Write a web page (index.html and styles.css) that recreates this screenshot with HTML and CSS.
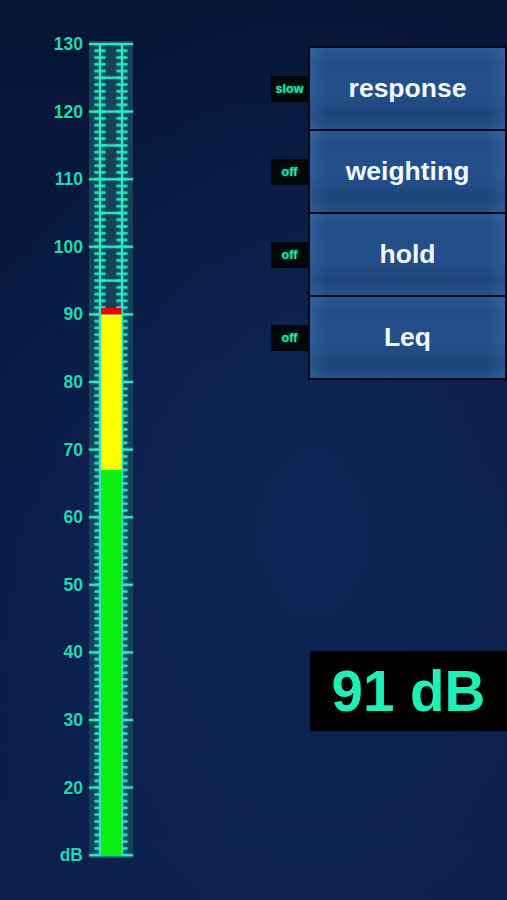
FILE: index.html
```html
<!DOCTYPE html>
<html>
<head>
<meta charset="utf-8">
<link rel="stylesheet" href="styles.css">
</head>
<body>
<div class="app">
  <svg class="meter" width="140" height="900" viewBox="0 0 140 900">
    <defs>
      <pattern id="minor" patternUnits="userSpaceOnUse" x="0" y="40.62" width="140" height="6.76">
        <rect x="94.5" y="2.28" width="11" height="2.2" fill="#2ee8c2"/>
        <rect x="116.5" y="2.28" width="11" height="2.2" fill="#2ee8c2"/>
      </pattern>
    </defs>
    <rect x="89" y="41" width="44" height="817" fill="#134259"/>
    <g class="ticks">
      <rect x="0" y="44" width="140" height="812" fill="url(#minor)"/>
      <rect x="99" y="44" width="2" height="812" fill="#2ee8c2"/>
      <rect x="121" y="44" width="2" height="812" fill="#2ee8c2"/>
      <g fill="#2ee8c2">
        <rect x="89" y="43" width="44" height="2"/>
        <rect x="89" y="110.6" width="44" height="2"/>
        <rect x="89" y="178.2" width="44" height="2"/>
        <rect x="89" y="245.8" width="44" height="2"/>
        <rect x="89" y="313.4" width="44" height="2"/>
        <rect x="89" y="381" width="44" height="2"/>
        <rect x="89" y="448.6" width="44" height="2"/>
        <rect x="89" y="516.2" width="44" height="2"/>
        <rect x="89" y="583.8" width="44" height="2"/>
        <rect x="89" y="651.4" width="44" height="2"/>
        <rect x="89" y="719" width="44" height="2"/>
        <rect x="89" y="786.6" width="44" height="2"/>
        <rect x="89" y="854.2" width="44" height="2"/>
        <rect x="100" y="76.8" width="22" height="2"/>
        <rect x="100" y="144.4" width="22" height="2"/>
        <rect x="100" y="212" width="22" height="2"/>
        <rect x="100" y="279.6" width="22" height="2"/>
      </g>
    </g>
    <rect x="101" y="470" width="20.5" height="386" fill="#0cf011"/>
    <rect x="101" y="314.4" width="20.5" height="155.6" fill="#ffff00"/>
    <rect x="101" y="308" width="20.5" height="6.4" fill="#e8000e"/>
    <g class="labels">
      <text x="83" y="44">130</text>
      <text x="83" y="111.6">120</text>
      <text x="83" y="179.2">110</text>
      <text x="83" y="246.8">100</text>
      <text x="83" y="314.4">90</text>
      <text x="83" y="382">80</text>
      <text x="83" y="449.6">70</text>
      <text x="83" y="517.2">60</text>
      <text x="83" y="584.8">50</text>
      <text x="83" y="652.4">40</text>
      <text x="83" y="720">30</text>
      <text x="83" y="787.6">20</text>
      <text x="83" y="855.2">dB</text>
    </g>
  </svg>
  <div class="panel">
    <div class="controls">
      <div class="row">
        <div class="indicator">slow</div>
        <div class="button">response</div>
      </div>
      <div class="row">
        <div class="indicator">off</div>
        <div class="button">weighting</div>
      </div>
      <div class="row">
        <div class="indicator">off</div>
        <div class="button">hold</div>
      </div>
      <div class="row">
        <div class="indicator">off</div>
        <div class="button">Leq</div>
      </div>
    </div>
    <div class="readout">91 dB</div>
  </div>
</div>
</body>
</html>
```

FILE: styles.css
```css
html, body {
  margin: 0;
  padding: 0;
}
body {
  width: 507px;
  height: 900px;
  overflow: hidden;
  font-family: "Liberation Sans", Arial, sans-serif;
  background:
    radial-gradient(ellipse 70% 60% at 62% 58%, #0e2656 0%, rgba(14,38,86,0) 100%),
    linear-gradient(to bottom, #061435 0%, #0a1d48 60%, #0b1f4c 100%);
}
.app {
  display: flex;
  width: 507px;
  height: 900px;
}
.meter {
  flex: none;
  display: block;
}
.ticks {
  filter: drop-shadow(0 0 1.2px rgba(46, 232, 194, 0.7));
}
.labels text {
  font-family: "Liberation Sans", Arial, sans-serif;
  font-weight: bold;
  font-size: 17.5px;
  fill: #20d8b2;
  text-anchor: end;
  dominant-baseline: central;
}
.panel {
  flex: 1;
  display: flex;
  flex-direction: column;
  align-items: flex-end;
  padding-top: 46px;
}
.controls {
  display: flex;
  flex-direction: column;
}
.row {
  display: flex;
  align-items: center;
}
.row + .row {
  margin-top: -2px;
}
.indicator {
  width: 37px;
  height: 26px;
  background: #00080c;
  color: #1ee8a4;
  font-weight: bold;
  font-size: 12.5px;
  display: flex;
  align-items: center;
  justify-content: center;
  text-shadow: 0 0 3px rgba(30, 232, 164, 0.6);
}
.button {
  box-sizing: border-box;
  width: 199px;
  height: 85px;
  border: 2px solid #020812;
  display: flex;
  align-items: center;
  justify-content: center;
  color: #f4f6fa;
  font-weight: bold;
  font-size: 26.5px;
  background:
    linear-gradient(to right, rgba(120,170,230,0.14) 0%, rgba(120,170,230,0) 9%, rgba(120,170,230,0) 91%, rgba(120,170,230,0.14) 100%),
    linear-gradient(to bottom, #28568f 0%, #224e88 18%, #23508a 55%, #1d457b 82%, #22508a 100%);
}
.readout {
  margin-top: 271px;
  width: 197px;
  height: 80px;
  background: #000000;
  color: #1ef0b6;
  font-weight: bold;
  font-size: 56.5px;
  display: flex;
  align-items: center;
  justify-content: center;
}
```
